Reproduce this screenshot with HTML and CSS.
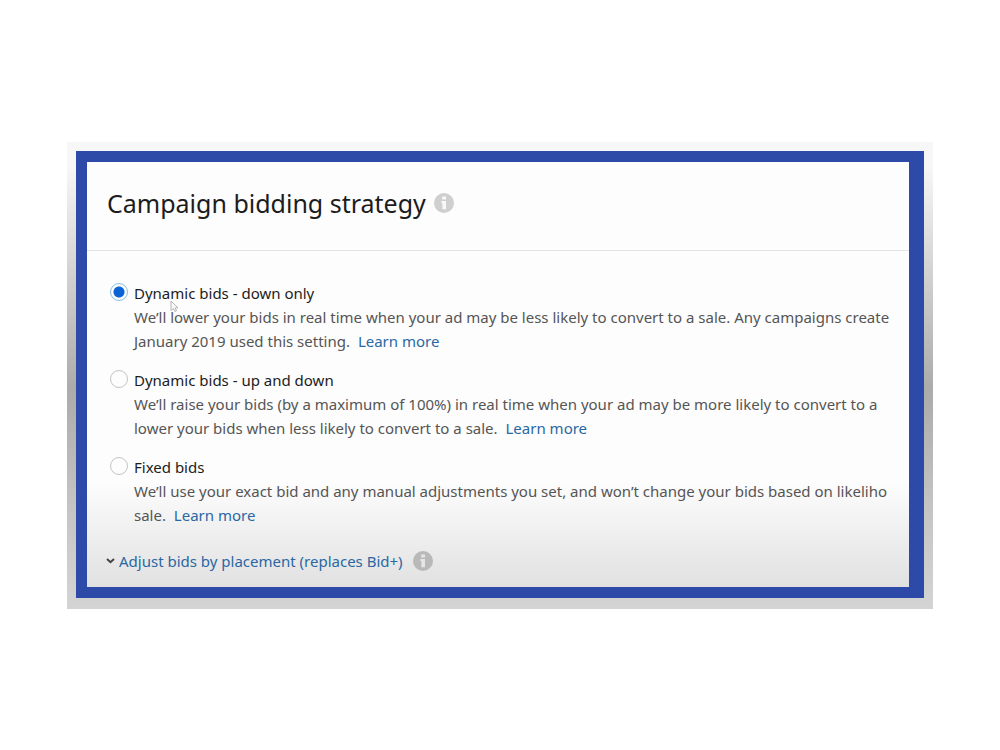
FILE: index.html
```
<!DOCTYPE html>
<html lang="en">
<head>
  <meta charset="UTF-8">
  <title>Campaign bidding strategy</title>
  <link rel="stylesheet" href="styles.css">
</head>
<body>

  <div class="backdrop">
    <form class="panel">
      <header class="panel-header">
        <h1>Campaign bidding strategy</h1>
        <svg class="info" viewBox="0 0 20 20" role="img" aria-label="Info">
          <circle cx="10" cy="10" r="10"/>
          <path d="M8.2 3.4h3.8v3.2H8.2zM7.4 8H12v8.2H8.4v-6.1h-1z"/>
        </svg>
      </header>

      <div class="options">
        <div class="option">
          <input type="radio" name="strategy" id="down" checked>
          <div class="text">
            <label for="down">Dynamic bids - down only</label>
            <p>We’ll lower your bids in real time when your ad may be less likely to convert to a sale. Any campaigns create<br>January 2019 used this setting. <a href="#">Learn more</a></p>
          </div>
          <svg class="cursor" viewBox="0 0 9 13" aria-hidden="true">
            <path d="M1 1v9.5l2.5-2 1.5 3 1.5-.8-1.3-2.8H8z"/>
          </svg>
        </div>

        <div class="option">
          <input type="radio" name="strategy" id="updown">
          <div class="text">
            <label for="updown">Dynamic bids - up and down</label>
            <p>We’ll raise your bids (by a maximum of 100%) in real time when your ad may be more likely to convert to a<br>lower your bids when less likely to convert to a sale. <a href="#">Learn more</a></p>
          </div>
        </div>

        <div class="option">
          <input type="radio" name="strategy" id="fixed">
          <div class="text">
            <label for="fixed">Fixed bids</label>
            <p>We’ll use your exact bid and any manual adjustments you set, and won’t change your bids based on likeliho<br>sale. <a href="#">Learn more</a></p>
          </div>
        </div>
      </div>

      <div class="placement">
        <svg class="chevron" viewBox="0 0 9 6" aria-hidden="true">
          <path d="M1 1l3.5 3.2L8 1"/>
        </svg>
        <a href="#">Adjust bids by placement (replaces Bid+)</a>
        <svg class="info" viewBox="0 0 20 20" role="img" aria-label="Info">
          <circle cx="10" cy="10" r="10"/>
          <path d="M8.2 3.4h3.8v3.2H8.2zM7.4 8H12v8.2H8.4v-6.1h-1z"/>
        </svg>
      </div>
    </form>
  </div>

</body>
</html>
```
FILE: styles.css
```
body {
  margin: 0;
  padding: 142px 67px;
  background: #fff;
  color: #1c1c1c;
  font-family: "Noto Sans", "Open Sans", sans-serif;
  font-size: 15px;
}
.backdrop {
  padding: 9px 9px 11px;
  background: linear-gradient(#f7f7f7 5%, #d2d2d2 28%, #ababab 53%, #c4c4c4 78%, #d4d4d4);
}
.panel {
  border: 11px solid #2e4aa8;
  border-right-width: 15px;
  background: linear-gradient(#fdfdfd 75%, #e1e1e1);
  overflow: hidden;
  white-space: nowrap;
}
.panel-header {
  display: flex;
  align-items: center;
  gap: 8px;
  height: 82px;
  padding: 0 20px 6px;
  border-bottom: 1px solid #e4e4e4;
}
h1 {
  margin: 0;
  font-size: 25px;
  font-weight: 400;
}
.info {
  flex: none;
  width: 20px;
  height: 20px;
  fill: #cfcfcf;
}
.info path { fill: #f8f8f8; }
.options {
  display: grid;
  gap: 16px;
  padding: 31px 0 0 23px;
}
.option {
  position: relative;
  display: flex;
  gap: 6px;
}
input {
  appearance: none;
  flex: none;
  width: 18px;
  height: 18px;
  margin: 1px 0 0;
  border: 1px solid #c4c4c4;
  border-radius: 50%;
  background: #fdfdfd;
}
input:checked {
  border-color: #8fbfdc;
  background: radial-gradient(circle, #0b63d6 5px, #fdfdfd 6px);
}
label {
  display: block;
  line-height: 23px;
}
p {
  margin: 0;
  color: #555;
  line-height: 24px;
}
a {
  color: #2a67a3;
  text-decoration: none;
}
p a { margin-left: 4px; }
.cursor {
  position: absolute;
  top: 18px;
  left: 60px;
  width: 9px;
  height: 13px;
  fill: #fafafa;
  stroke: #b5b5b5;
}
.placement {
  display: flex;
  align-items: center;
  gap: 4px;
  padding: 22px 19px 14px;
}
.placement a { line-height: 24px; }
.placement .info {
  margin-left: 6px;
  fill: #b9b9b9;
}
.placement .info path { fill: #e6e6e6; }
.chevron {
  width: 9px;
  height: 6px;
  fill: none;
  stroke: #444;
  stroke-width: 2;
}
```
